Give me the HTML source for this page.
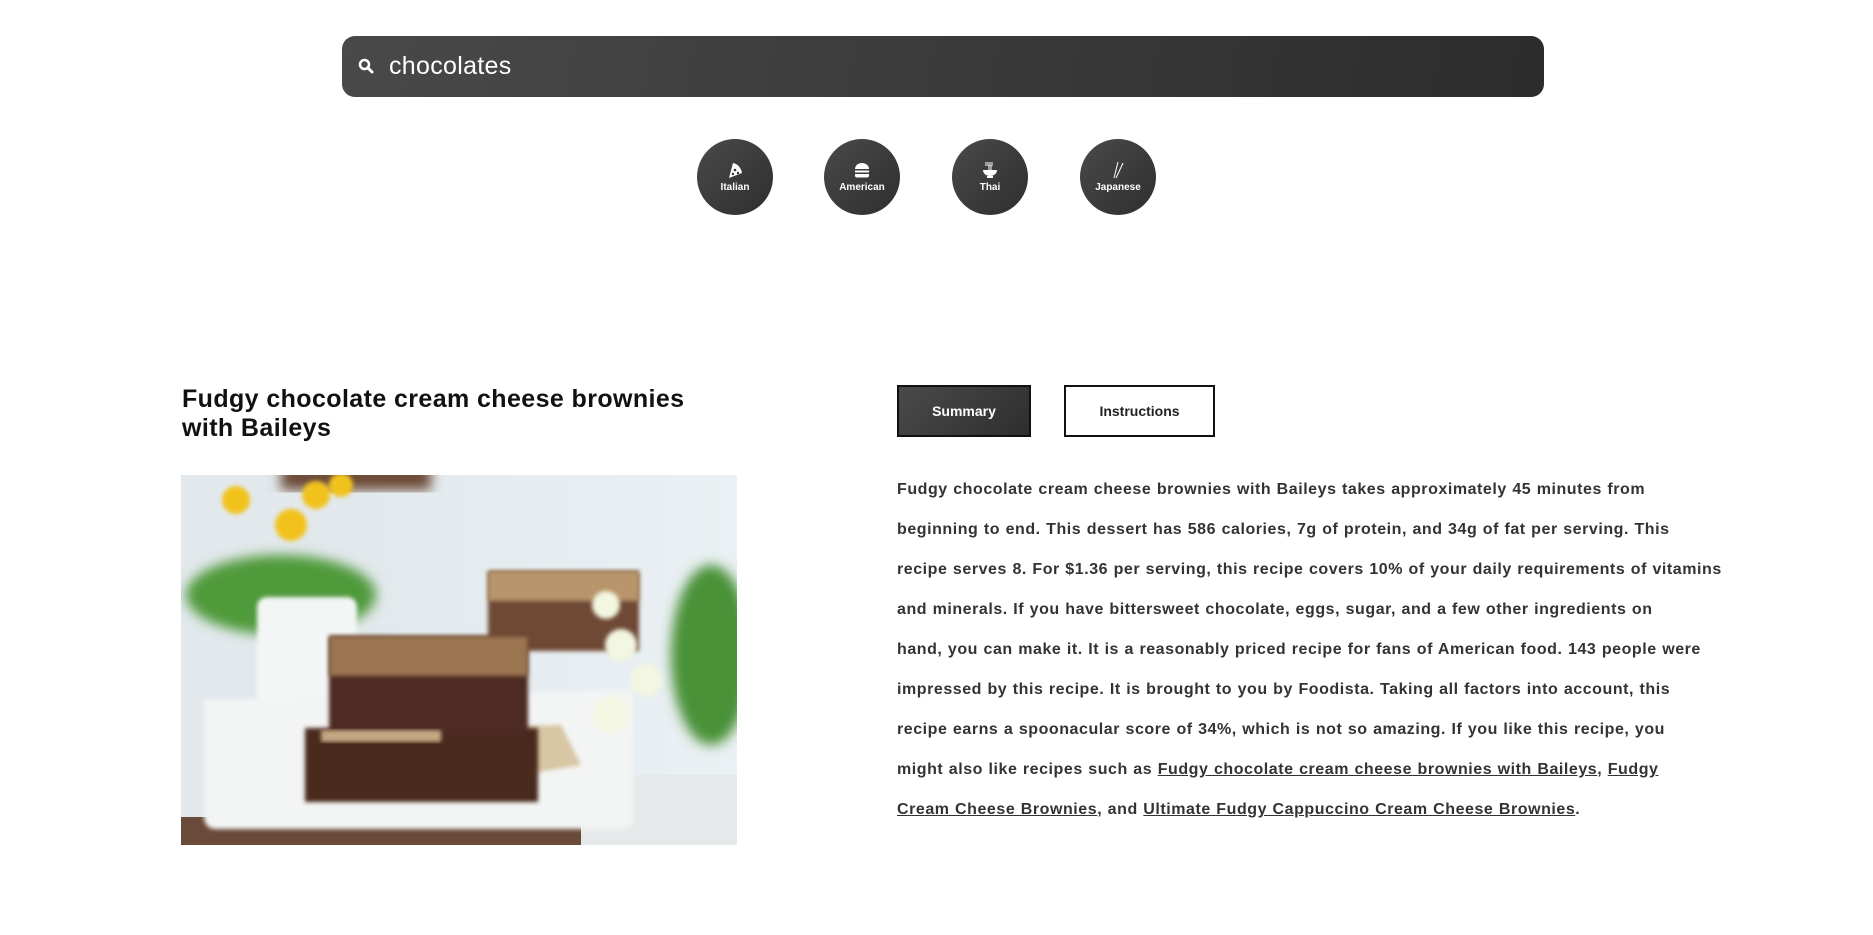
<!DOCTYPE html>
<html><head><meta charset="utf-8"><style>
*{margin:0;padding:0;box-sizing:border-box}
body{width:1873px;height:935px;background:#fff;font-family:"Liberation Sans",sans-serif;position:relative;overflow:hidden;color:#222}
.search{position:absolute;left:342px;top:36px;width:1202px;height:61px;border-radius:13px;background:linear-gradient(100deg,#494949,#2c2c2c)}
.search .t{position:absolute;left:47px;top:16px;font-size:25px;color:#fff;letter-spacing:0.3px}
.search svg{position:absolute;left:16px;top:22px}
.c{position:absolute;top:139px;width:76px;height:76px;border-radius:50%;background:linear-gradient(135deg,#4a4a4a,#2e2e2e);color:#fff;font-size:10px;font-weight:bold;text-align:center}
.c svg{position:absolute;left:29px;top:22px}
.c span{position:absolute;left:0;right:0;top:43px}
h1{position:absolute;left:182px;top:385px;font-size:25px;font-weight:bold;line-height:29px;color:#111;letter-spacing:0.4px}
.img{position:absolute;left:181px;top:475px;width:556px;height:370px}
.b{position:absolute;top:385px;height:52px;font-size:14px;font-weight:bold;text-align:center;line-height:48px;border:2px solid #111}
.p{position:absolute;left:897px;top:470px;font-size:16px;font-weight:bold;color:#333;line-height:40px;white-space:nowrap;word-spacing:0.5px;letter-spacing:0.55px}
.p a{color:#333;text-decoration:underline}
</style></head><body>
<div class="search"><svg width="16" height="16" viewBox="0 0 16 16"><circle cx="6.5" cy="6.5" r="4.5" stroke="#fff" stroke-width="2.5" fill="none"/><path d="M10 10l4 4" stroke="#fff" stroke-width="3" stroke-linecap="round"/></svg><div class="t">chocolates</div></div>

<div class="c" style="left:697px"><svg width="18" height="18" viewBox="0 0 18 18"><path d="M3 17L7 2c5 1 8 5 9 10z" fill="#fff"/><circle cx="9" cy="9" r="1.3" fill="#333"/><circle cx="12" cy="12" r="1.2" fill="#333"/><circle cx="7" cy="13" r="1.2" fill="#333"/></svg><span>Italian</span></div>
<div class="c" style="left:824px"><svg width="18" height="18" viewBox="0 0 18 18"><path d="M2 8a7 6 0 0 1 14 0z" fill="#fff"/><rect x="2" y="9.5" width="14" height="2" fill="#fff"/><path d="M2 13h14v1.5a2 2 0 0 1-2 2H4a2 2 0 0 1-2-2z" fill="#fff"/></svg><span>American</span></div>
<div class="c" style="left:952px"><svg width="18" height="18" viewBox="0 0 18 18"><path d="M4 2h8M4 4h8M8 4v5M10 4v5" stroke="#fff" stroke-width="1"/><path d="M2 9h14a7 6 0 0 1-14 0z" fill="#fff"/><rect x="6" y="15" width="6" height="2" fill="#fff"/></svg><span>Thai</span></div>
<div class="c" style="left:1080px"><svg width="18" height="18" viewBox="0 0 18 18"><path d="M9 1L5 17M14 2L7 17" stroke="#fff" stroke-width="1"/></svg><span>Japanese</span></div>

<h1>Fudgy chocolate cream cheese brownies<br>with Baileys</h1>

<svg class="img" viewBox="0 0 556 370" preserveAspectRatio="none">
<defs><filter id="bl"><feGaussianBlur stdDeviation="6"/></filter><filter id="bs"><feGaussianBlur stdDeviation="2"/></filter>
<linearGradient id="bg" x1="0" y1="0" x2="1" y2="0"><stop offset="0" stop-color="#dfe6ea"/><stop offset="1" stop-color="#eaf0f3"/></linearGradient></defs>
<rect width="556" height="370" fill="url(#bg)"/>
<rect x="0" y="0" width="200" height="370" fill="#e2e8ec"/>
<rect x="100" y="-10" width="150" height="25" fill="#6a4a35" filter="url(#bl)"/>
<g filter="url(#bl)"><ellipse cx="100" cy="120" rx="95" ry="40" fill="#4f9a3a"/><ellipse cx="530" cy="180" rx="40" ry="90" fill="#4a9238"/></g>
<g filter="url(#bs)" fill="#f2c21a"><circle cx="55" cy="25" r="14"/><circle cx="110" cy="50" r="16"/><circle cx="135" cy="20" r="14"/><circle cx="160" cy="10" r="12"/></g>
<rect x="76" y="122" width="100" height="120" rx="10" fill="#f4f6f6" filter="url(#bs)"/>
<rect x="0" y="342" width="400" height="28" fill="#6a4a38"/>
<rect x="400" y="300" width="156" height="70" fill="#e6e9ea"/>
<path d="M23 225 L452 215 L452 345 Q452 354 440 354 L35 354 Q23 354 23 340Z" fill="#f3f4f4" filter="url(#bs)"/>
<rect x="307" y="96" width="151" height="80" fill="#6e4a35" filter="url(#bs)"/>
<rect x="307" y="96" width="151" height="30" fill="#b8956b" filter="url(#bs)"/>
<g filter="url(#bs)" fill="#f3f6e0"><circle cx="425" cy="130" r="14"/><circle cx="440" cy="170" r="16"/><circle cx="465" cy="205" r="16"/><circle cx="430" cy="240" r="18"/></g>
<path d="M190 255 L380 250 L400 290 L340 300 L210 300Z" fill="#d8c6a4" filter="url(#bs)"/>
<rect x="124" y="253" width="233" height="74" fill="#4a2a1f" filter="url(#bs)"/>
<rect x="148" y="161" width="199" height="101" fill="#4e2c20" filter="url(#bs)"/>
<rect x="148" y="161" width="199" height="40" fill="#9a7550" filter="url(#bs)"/>
<rect x="140" y="255" width="120" height="12" fill="#c4a884" filter="url(#bs)"/>
</svg>

<div class="b" style="left:897px;width:134px;background:linear-gradient(135deg,#4a4a4a,#2e2e2e);color:#fff">Summary</div>
<div class="b" style="left:1064px;width:151px;background:#fff;color:#222">Instructions</div>

<div class="p">Fudgy chocolate cream cheese brownies with Baileys takes approximately 45 minutes from<br>
beginning to end. This dessert has 586 calories, 7g of protein, and 34g of fat per serving. This<br>
recipe serves 8. For $1.36 per serving, this recipe covers 10% of your daily requirements of vitamins<br>
and minerals. If you have bittersweet chocolate, eggs, sugar, and a few other ingredients on<br>
hand, you can make it. It is a reasonably priced recipe for fans of American food. 143 people were<br>
impressed by this recipe. It is brought to you by Foodista. Taking all factors into account, this<br>
recipe earns a spoonacular score of 34%, which is not so amazing. If you like this recipe, you<br>
might also like recipes such as <a>Fudgy chocolate cream cheese brownies with Baileys</a>, <a>Fudgy</a><br>
<a>Cream Cheese Brownies</a>, and <a>Ultimate Fudgy Cappuccino Cream Cheese Brownies</a>.</div>
</body></html>
